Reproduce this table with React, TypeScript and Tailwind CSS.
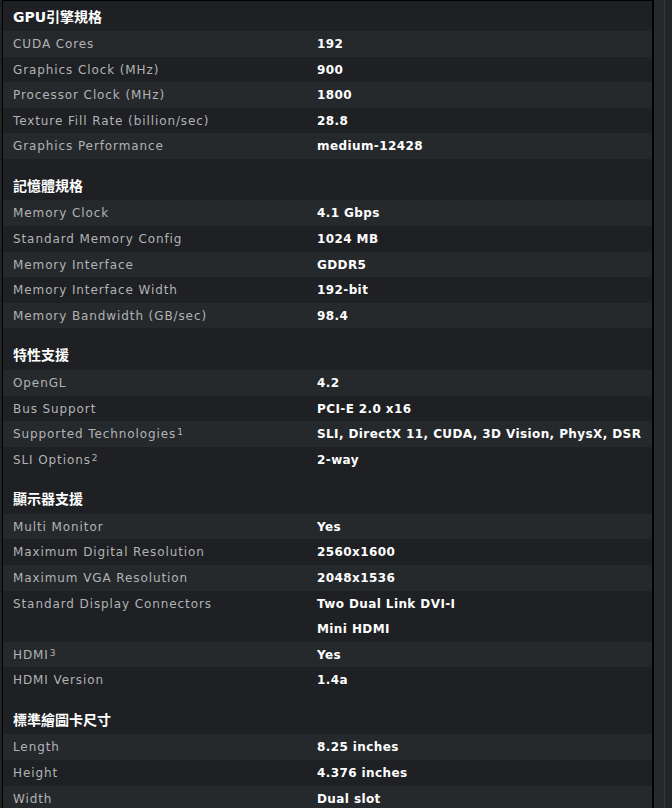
import type { ReactNode } from 'react';

interface Spec {
  label: ReactNode;
  values: string[];
}

interface Section {
  title: string;
  rows: Spec[];
}

const Sup = ({ n }: { n: number }) => (
  <sup className="text-[9px] leading-none relative -top-[3px] ml-px">{n}</sup>
);

const SECTIONS: Section[] = [
  {
    title: 'GPU引擎規格',
    rows: [
      { label: 'CUDA Cores', values: ['192'] },
      { label: 'Graphics Clock (MHz)', values: ['900'] },
      { label: 'Processor Clock (MHz)', values: ['1800'] },
      { label: 'Texture Fill Rate (billion/sec)', values: ['28.8'] },
      { label: 'Graphics Performance', values: ['medium-12428'] },
    ],
  },
  {
    title: '記憶體規格',
    rows: [
      { label: 'Memory Clock', values: ['4.1 Gbps'] },
      { label: 'Standard Memory Config', values: ['1024 MB'] },
      { label: 'Memory Interface', values: ['GDDR5'] },
      { label: 'Memory Interface Width', values: ['192-bit'] },
      { label: 'Memory Bandwidth (GB/sec)', values: ['98.4'] },
    ],
  },
  {
    title: '特性支援',
    rows: [
      { label: 'OpenGL', values: ['4.2'] },
      { label: 'Bus Support', values: ['PCI-E 2.0 x16'] },
      {
        label: (
          <>
            Supported Technologies
            <Sup n={1} />
          </>
        ),
        values: ['SLI, DirectX 11, CUDA, 3D Vision, PhysX, DSR'],
      },
      {
        label: (
          <>
            SLI Options
            <Sup n={2} />
          </>
        ),
        values: ['2-way'],
      },
    ],
  },
  {
    title: '顯示器支援',
    rows: [
      { label: 'Multi Monitor', values: ['Yes'] },
      { label: 'Maximum Digital Resolution', values: ['2560x1600'] },
      { label: 'Maximum VGA Resolution', values: ['2048x1536'] },
      { label: 'Standard Display Connectors', values: ['Two Dual Link DVI-I', 'Mini HDMI'] },
      {
        label: (
          <>
            HDMI
            <Sup n={3} />
          </>
        ),
        values: ['Yes'],
      },
      { label: 'HDMI Version', values: ['1.4a'] },
    ],
  },
  {
    title: '標準繪圖卡尺寸',
    rows: [
      { label: 'Length', values: ['8.25 inches'] },
      { label: 'Height', values: ['4.376 inches'] },
      { label: 'Width', values: ['Dual slot'] },
    ],
  },
];

const FONT = "font-['DejaVu_Sans','Noto_Sans_CJK_TC',sans-serif]";

export default function App() {
  return (
    <div className={`w-[672px] h-[808px] overflow-hidden flex bg-[#1e2023] ${FONT}`}>
      {/* left edge */}
      <div className="w-[3px] shrink-0 bg-[#202326] border-r border-black" />

      {/* spec table */}
      <div className="w-[649px] shrink-0 border-t border-black bg-[#1e2023]">
        {SECTIONS.map((s, si) => (
          <div key={si} className={si === 0 ? 'pt-[2px]' : 'pt-[13.5px]'}>
            <div className="h-[28px] flex items-center px-[10px] text-[14px] font-bold text-white">
              {s.title}
            </div>
            {s.rows.map((r, ri) => (
              <div
                key={ri}
                className={`flex text-[12px] ${ri % 2 === 0 ? 'bg-[#26292c]' : 'bg-[#1e2023]'}`}
              >
                <div className="w-[304px] shrink-0 pl-[10px] pt-[2px] leading-[23.6px] text-[#b1b3b5] tracking-[0.9px]">
                  {r.label}
                </div>
                <div className="flex-1 pl-[10px] font-bold text-white tracking-[0.4px]">
                  {r.values.map((v) => (
                    <div key={v} className="pt-[2px] leading-[23.6px]">
                      {v}
                    </div>
                  ))}
                </div>
              </div>
            ))}
          </div>
        ))}
      </div>

      {/* scrollbar strip */}
      <div className="flex-1 flex border-l-2 border-black bg-[#25282b]">
        <div className="w-[10px] bg-[#272a2d]" />
        <div className="w-px bg-[#34373a]" />
        <div className="flex-1 bg-[#232629]" />
      </div>
    </div>
  );
}
